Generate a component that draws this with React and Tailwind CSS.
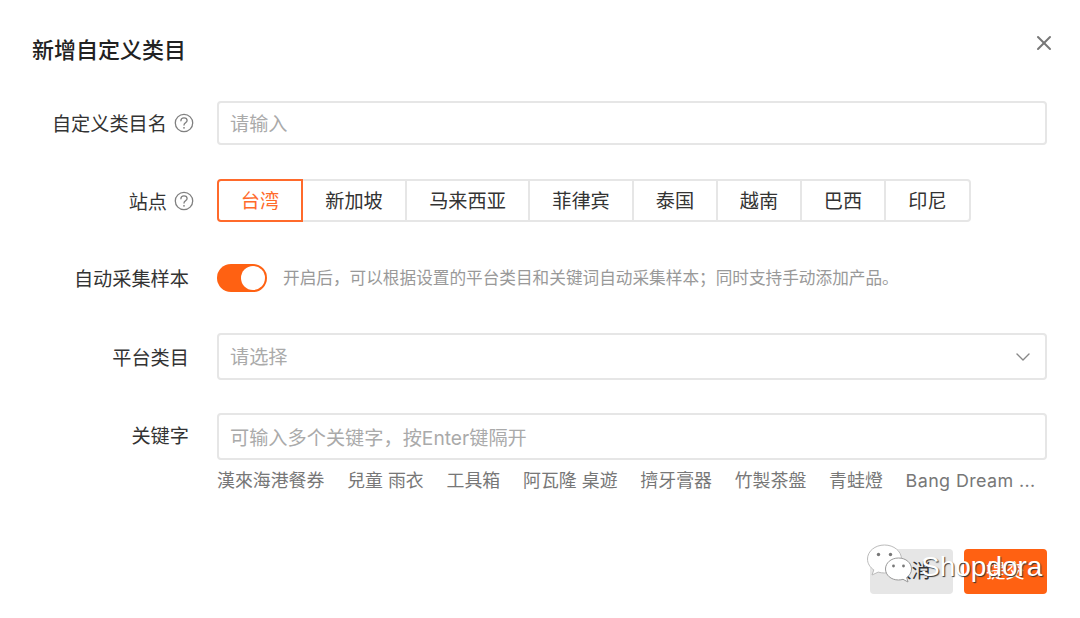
import React from 'react'
import { ChevronDown, X } from 'lucide-react'

const FONT = 'font-["Inter","Noto_Sans_CJK_SC",sans-serif]'

const SITES = [
  { name: '台湾', width: 'w-[86px]', active: true },
  { name: '新加坡', width: 'w-[104px]' },
  { name: '马来西亚', width: 'w-[123px]' },
  { name: '菲律宾', width: 'w-[104px]' },
  { name: '泰国', width: 'w-[84px]' },
  { name: '越南', width: 'w-[84px]' },
  { name: '巴西', width: 'w-[84px]' },
  { name: '印尼', width: 'w-[85px]' },
]

const KEYWORDS = ['漢來海港餐券', '兒童 雨衣', '工具箱', '阿瓦隆 桌遊', '擠牙膏器', '竹製茶盤', '青蛙燈', 'Bang Dream ...']

function HelpIcon() {
  return (
    <svg width="20" height="20" viewBox="0 0 20 20" fill="none" className="shrink-0">
      <circle cx="10" cy="10" r="8.700" stroke="#808080" strokeWidth="1.300" />
      <path d="M6.900 7.800c0-1.700 1.300-2.900 3.100-2.900s3.100 1.200 3.100 2.700c0 2.200-3.100 2.300-3.100 4.500" stroke="#808080" strokeWidth="1.300" strokeLinecap="round" />
      <circle cx="10" cy="14.800" r="0.900" fill="#808080" />
    </svg>
  )
}

function Row({ label, help, className = '', labelClass = '', children }) {
  return (
    <div className={`flex items-center ${className}`}>
      <div className={`w-[194px] shrink-0 flex items-center justify-end gap-[7px] text-[19.200px] text-[#333] ${help ? '' : 'pr-[5px]'} ${labelClass}`}>
        <span className="pt-[2px] leading-[24px]">{label}</span>
        {help && <HelpIcon />}
      </div>
      <div className="ml-[23px] flex-1 min-w-0">{children}</div>
    </div>
  )
}

function WeChatMark() {
  return (
    <svg width="50" height="44" viewBox="0 0 50 44" className="absolute left-[866px] top-[544px]">
      <path d="M18.500 1C9 1 1.500 7.300 1.500 15c0 4.500 2.500 8.300 6.300 10.900L6 31l6.200-2.900c2 .6 4.100.9 6.300.9 9.400 0 17-6.300 17-14S27.900 1 18.500 1z" fill="#fff" stroke="#bbb" strokeWidth="1" />
      <circle cx="12.500" cy="10.500" r="1.700" fill="#777" />
      <circle cx="24.500" cy="10.500" r="1.700" fill="#777" />
      <path d="M32.500 14C25 14 19.500 19 19.500 25s5.500 11 13 11c1.600 0 3.100-.2 4.500-.7l5 2.700-1.300-4.500c2.900-2 4.800-5 4.800-8.500 0-6-5.500-11-13-11z" fill="#fff" stroke="#999" strokeWidth="1" />
      <circle cx="27.500" cy="22" r="1.400" fill="#777" />
      <circle cx="37.500" cy="22" r="1.400" fill="#777" />
    </svg>
  )
}

export default function App() {
  return (
    <div className={`relative w-[1080px] h-[618px] overflow-hidden bg-white ${FONT}`}>
      <div className="flex items-start justify-between pl-[32px] pr-[24px] pt-[35px]">
        <h1 className="text-[22px] leading-[30px] font-medium text-[#222]">新增自定义类目</h1>
        <X className="w-[24px] h-[24px] mt-[-4px] text-[#777]" strokeWidth={2} />
      </div>

      <div className="pr-[33px] mt-[36px]">
        <Row label="自定义类目名" help>
          <input
            placeholder="请输入"
            className="w-full h-[44px] pl-[11px] pr-[13px] pt-[2px] border-2 border-[#e6e6e6] rounded-[4px] text-[19.200px] outline-none placeholder:text-[#aaa]"
          />
        </Row>

        <Row label="站点" help className="mt-[34px]">
          <div className="flex h-[43px]">
            {SITES.map((s, i) => (
              <div
                key={s.name}
                className={`${s.width} pt-[2px] flex items-center justify-center text-[19.200px] border-2 ${
                  s.active
                    ? 'border-[#ff6a2b] text-[#ff6a2b] rounded-l-[4px]'
                    : `border-[#e6e6e6] border-l-0 text-[#333] ${i === SITES.length - 1 ? 'rounded-r-[4px]' : ''}`
                }`}>
                {s.name}
              </div>
            ))}
          </div>
        </Row>

        <Row label="自动采集样本" className="mt-[42px]">
          <div className="flex items-center">
            <div className="w-[50px] h-[28px] rounded-full bg-[#ff6112] flex items-center justify-end pr-[2px]">
              <div className="w-[24px] h-[24px] rounded-full bg-white" />
            </div>
            <p className="ml-[16px] text-[16.650px] leading-[24px] text-[#999]">
              开启后，可以根据设置的平台类目和关键词自动采集样本；同时支持手动添加产品。
            </p>
          </div>
        </Row>

        <Row label="平台类目" className="mt-[41px]">
          <div className="h-[47px] pl-[11px] pr-[10px] border-2 border-[#e6e6e6] rounded-[4px] flex items-center justify-between">
            <span className="pt-[2px] text-[19.200px] text-[#aaa]">请选择</span>
            <ChevronDown className="w-[24px] h-[24px] text-[#888]" strokeWidth={1.400} />
          </div>
        </Row>

        <Row label="关键字" className="mt-[33px] !items-start" labelClass="h-[44px]">
          <input
            placeholder="可输入多个关键字，按Enter键隔开"
            className="w-full h-[47px] pl-[11px] pr-[13px] pt-[2px] border-2 border-[#e6e6e6] rounded-[4px] text-[19.200px] outline-none placeholder:text-[#aaa]"
          />
          <div className="flex gap-[22.800px] mt-[8px] text-[17.900px] leading-[26px] text-[#777] whitespace-nowrap">
            {KEYWORDS.map((k, i) => (
              <span key={k} className={i === KEYWORDS.length - 1 ? 'tracking-[0.4px]' : ''}>{k}</span>
            ))}
          </div>
        </Row>
      </div>

      <div className="flex justify-end gap-[11px] pr-[33px] mt-[55px]">
        <button className="w-[83px] h-[45px] rounded-[4px] bg-[#e6e6e6] text-[19.200px] text-[#333]">取消</button>
        <button className="w-[83px] h-[45px] rounded-[4px] bg-[#ff6112] text-[19.200px] text-white">提交</button>
      </div>

      <WeChatMark />
      <span className="absolute left-[921px] top-[550px] font-['Liberation_Sans',sans-serif] text-[28px] leading-[34px] text-white [text-shadow:1px_1px_1px_#333]">Shopdora</span>
    </div>
  )
}
